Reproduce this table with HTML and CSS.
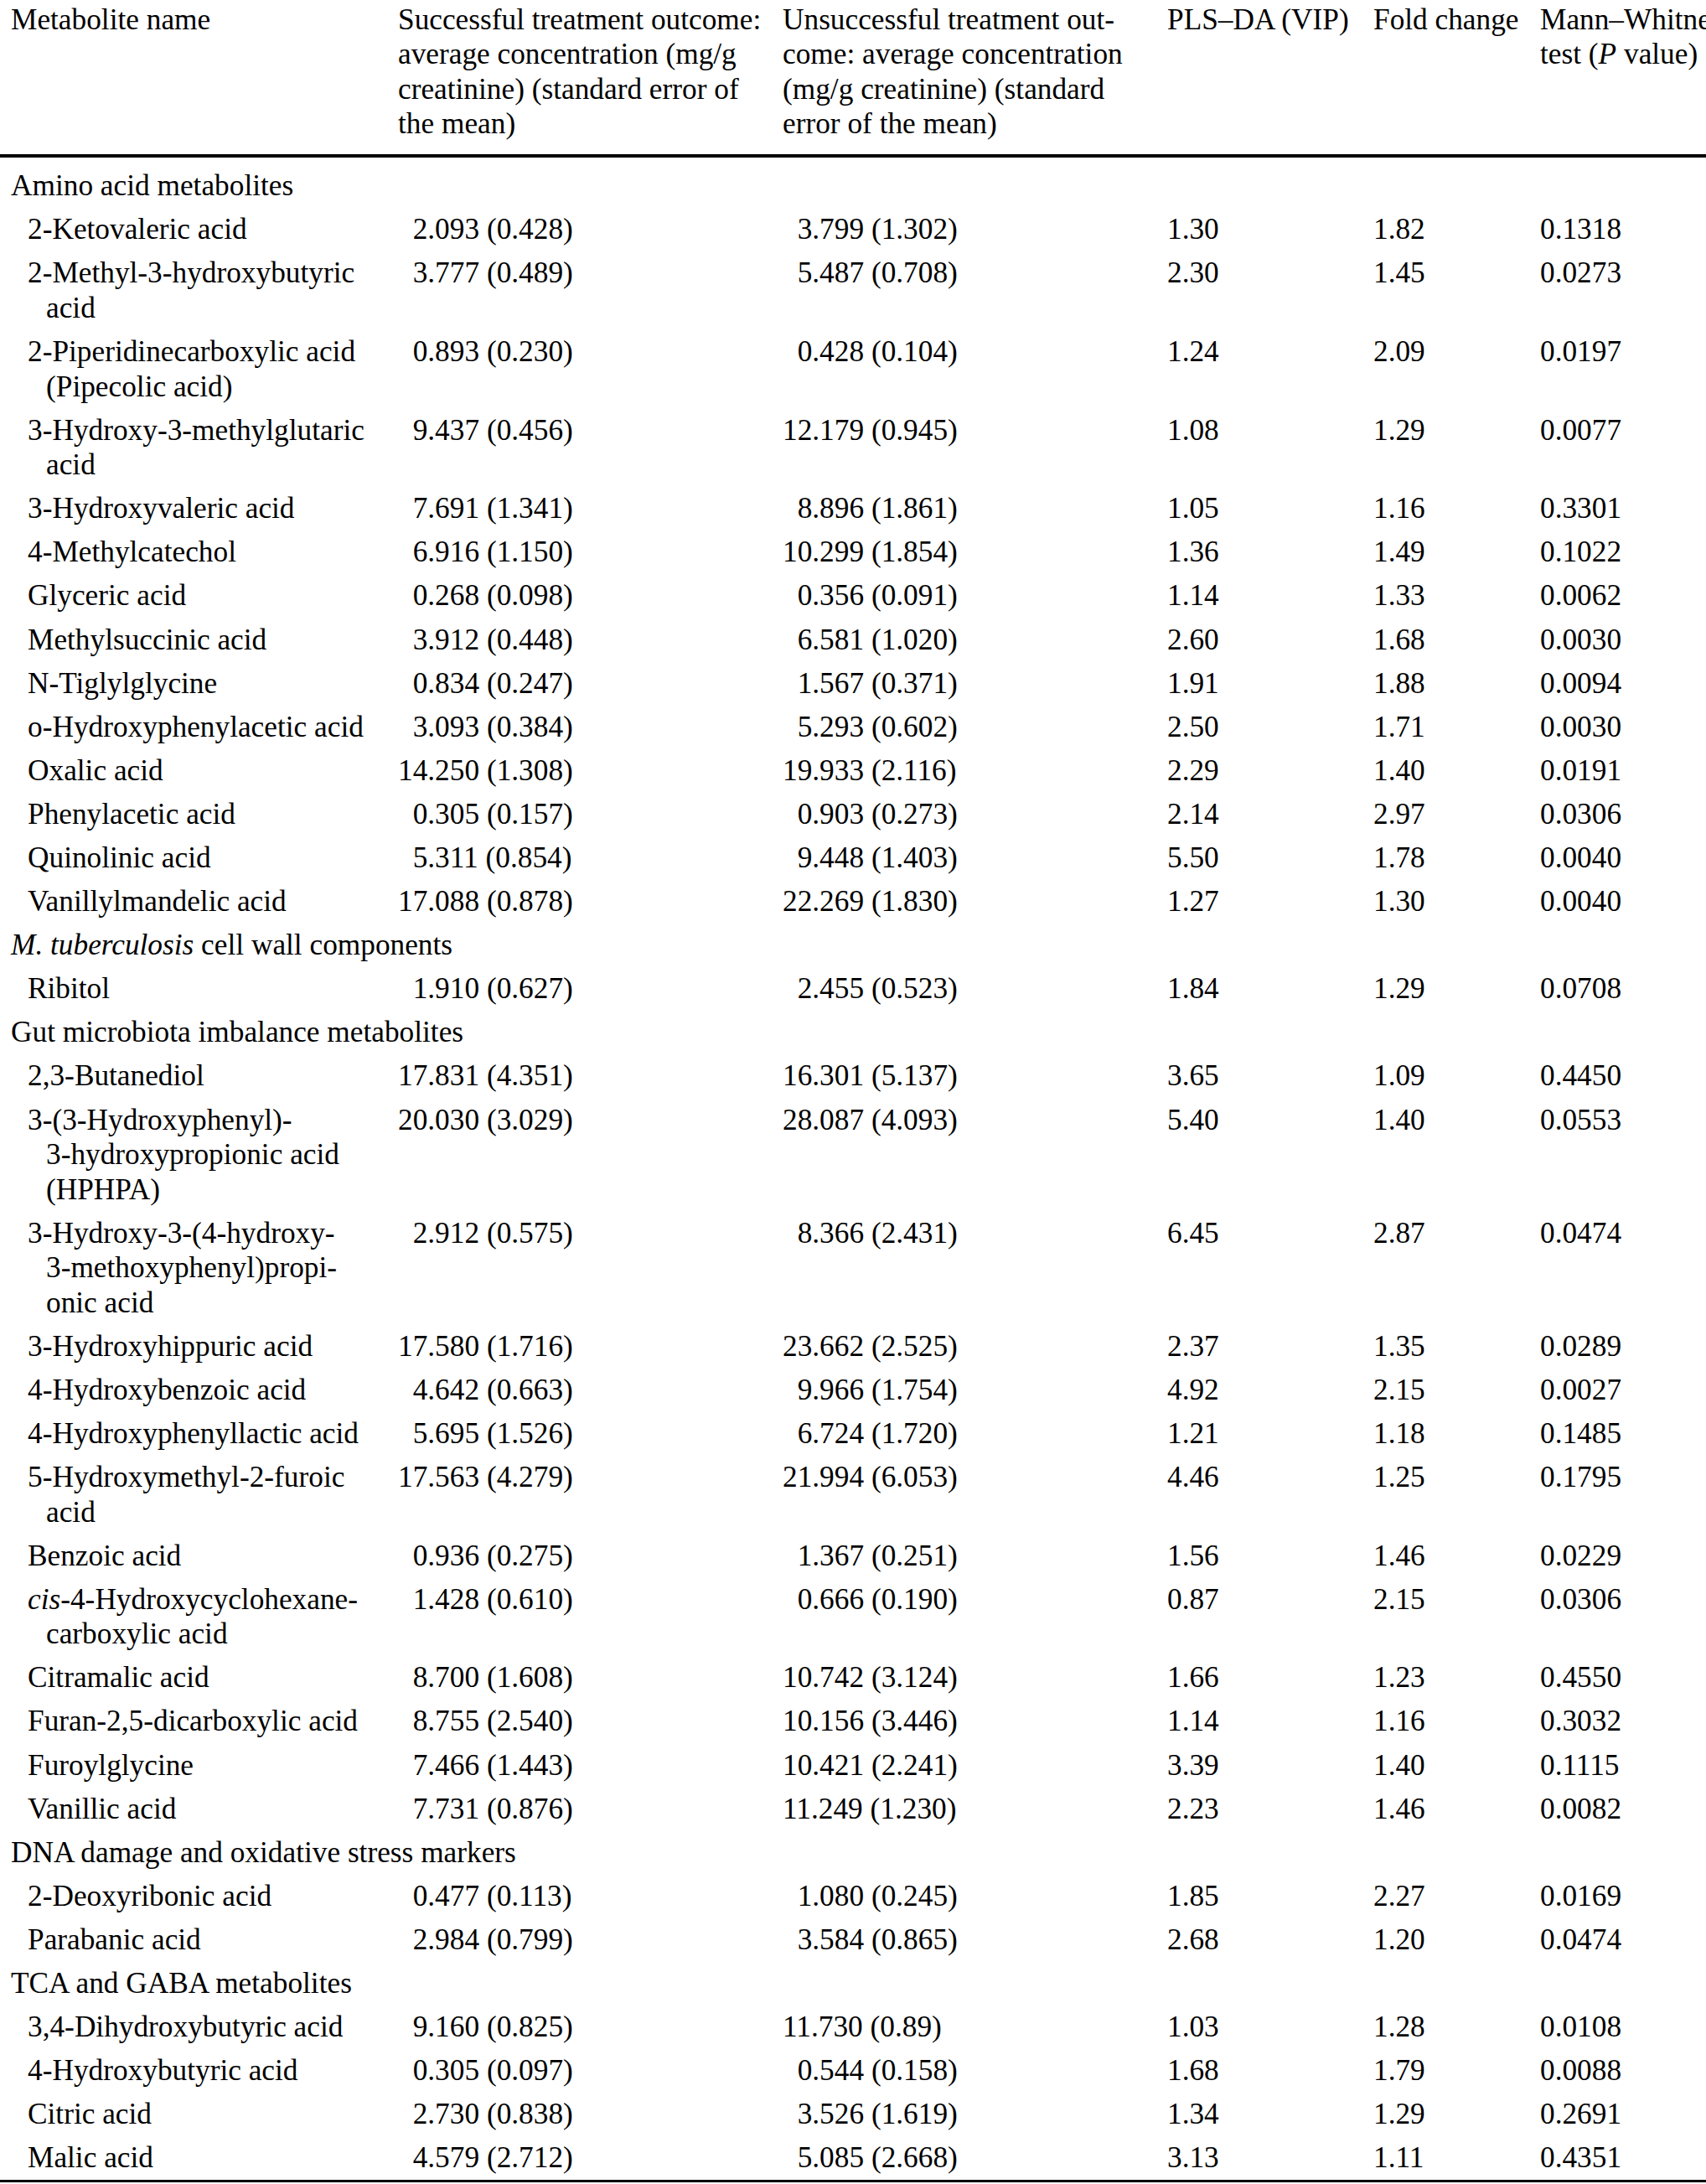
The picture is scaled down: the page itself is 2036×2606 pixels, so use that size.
FILE: index.html
```
<!DOCTYPE html>
<html lang="en">

<head>
    <meta charset="UTF-8">
    <meta name="viewport" content="width=device-width, initial-scale=1.0">
    <title>Urinary metabolites and treatment outcome</title>
    <link rel="stylesheet" href="styles.css">
</head>

<body>
    <div class="page">
        <table class="data">
            <colgroup>
                <col class="c-name">
                <col class="c-ok">
                <col class="c-fail">
                <col class="c-vip">
                <col class="c-fold">
                <col class="c-p">
            </colgroup>
            <thead>
                <tr>
                    <th class="first">Metabolite name</th>
                    <th>Successful treatment outcome:<br>average concentration (mg/g<br>creatinine) (standard error of<br>the mean)</th>
                    <th>Unsuccessful treatment out-<br>come: average concentration<br>(mg/g creatinine) (standard<br>error of the mean)</th>
                    <th>PLS–DA (VIP)</th>
                    <th>Fold change</th>
                    <th>Mann–Whitney<br>test (<i>P</i> value)</th>
                </tr>
            </thead>
            <tbody>
                <tr class="cat top"><td colspan="6">Amino acid metabolites</td></tr>
                <tr><td class="item">2-Ketovaleric acid</td><td class="n1">2.093 (0.428)</td><td class="n1">3.799 (1.302)</td><td>1.30</td><td>1.82</td><td>0.1318</td></tr>
                <tr><td class="item">2-Methyl-3-hydroxybutyric<br>acid</td><td class="n1">3.777 (0.489)</td><td class="n1">5.487 (0.708)</td><td>2.30</td><td>1.45</td><td>0.0273</td></tr>
                <tr><td class="item">2-Piperidinecarboxylic acid<br>(Pipecolic acid)</td><td class="n1">0.893 (0.230)</td><td class="n1">0.428 (0.104)</td><td>1.24</td><td>2.09</td><td>0.0197</td></tr>
                <tr><td class="item">3-Hydroxy-3-methylglutaric<br>acid</td><td class="n1">9.437 (0.456)</td><td>12.179 (0.945)</td><td>1.08</td><td>1.29</td><td>0.0077</td></tr>
                <tr><td class="item">3-Hydroxyvaleric acid</td><td class="n1">7.691 (1.341)</td><td class="n1">8.896 (1.861)</td><td>1.05</td><td>1.16</td><td>0.3301</td></tr>
                <tr><td class="item">4-Methylcatechol</td><td class="n1">6.916 (1.150)</td><td>10.299 (1.854)</td><td>1.36</td><td>1.49</td><td>0.1022</td></tr>
                <tr><td class="item">Glyceric acid</td><td class="n1">0.268 (0.098)</td><td class="n1">0.356 (0.091)</td><td>1.14</td><td>1.33</td><td>0.0062</td></tr>
                <tr><td class="item">Methylsuccinic acid</td><td class="n1">3.912 (0.448)</td><td class="n1">6.581 (1.020)</td><td>2.60</td><td>1.68</td><td>0.0030</td></tr>
                <tr><td class="item">N-Tiglylglycine</td><td class="n1">0.834 (0.247)</td><td class="n1">1.567 (0.371)</td><td>1.91</td><td>1.88</td><td>0.0094</td></tr>
                <tr><td class="item">o-Hydroxyphenylacetic acid</td><td class="n1">3.093 (0.384)</td><td class="n1">5.293 (0.602)</td><td>2.50</td><td>1.71</td><td>0.0030</td></tr>
                <tr><td class="item">Oxalic acid</td><td>14.250 (1.308)</td><td>19.933 (2.116)</td><td>2.29</td><td>1.40</td><td>0.0191</td></tr>
                <tr><td class="item">Phenylacetic acid</td><td class="n1">0.305 (0.157)</td><td class="n1">0.903 (0.273)</td><td>2.14</td><td>2.97</td><td>0.0306</td></tr>
                <tr><td class="item">Quinolinic acid</td><td class="n1">5.311 (0.854)</td><td class="n1">9.448 (1.403)</td><td>5.50</td><td>1.78</td><td>0.0040</td></tr>
                <tr><td class="item">Vanillylmandelic acid</td><td>17.088 (0.878)</td><td>22.269 (1.830)</td><td>1.27</td><td>1.30</td><td>0.0040</td></tr>

                <tr class="cat"><td colspan="6"><i>M. tuberculosis</i> cell wall components</td></tr>
                <tr><td class="item">Ribitol</td><td class="n1">1.910 (0.627)</td><td class="n1">2.455 (0.523)</td><td>1.84</td><td>1.29</td><td>0.0708</td></tr>

                <tr class="cat"><td colspan="6">Gut microbiota imbalance metabolites</td></tr>
                <tr><td class="item">2,3-Butanediol</td><td>17.831 (4.351)</td><td>16.301 (5.137)</td><td>3.65</td><td>1.09</td><td>0.4450</td></tr>
                <tr><td class="item">3-(3-Hydroxyphenyl)-<br>3-hydroxypropionic acid<br>(HPHPA)</td><td>20.030 (3.029)</td><td>28.087 (4.093)</td><td>5.40</td><td>1.40</td><td>0.0553</td></tr>
                <tr><td class="item">3-Hydroxy-3-(4-hydroxy-<br>3-methoxyphenyl)propi-<br>onic acid</td><td class="n1">2.912 (0.575)</td><td class="n1">8.366 (2.431)</td><td>6.45</td><td>2.87</td><td>0.0474</td></tr>
                <tr><td class="item">3-Hydroxyhippuric acid</td><td>17.580 (1.716)</td><td>23.662 (2.525)</td><td>2.37</td><td>1.35</td><td>0.0289</td></tr>
                <tr><td class="item">4-Hydroxybenzoic acid</td><td class="n1">4.642 (0.663)</td><td class="n1">9.966 (1.754)</td><td>4.92</td><td>2.15</td><td>0.0027</td></tr>
                <tr><td class="item">4-Hydroxyphenyllactic acid</td><td class="n1">5.695 (1.526)</td><td class="n1">6.724 (1.720)</td><td>1.21</td><td>1.18</td><td>0.1485</td></tr>
                <tr><td class="item">5-Hydroxymethyl-2-furoic<br>acid</td><td>17.563 (4.279)</td><td>21.994 (6.053)</td><td>4.46</td><td>1.25</td><td>0.1795</td></tr>
                <tr><td class="item">Benzoic acid</td><td class="n1">0.936 (0.275)</td><td class="n1">1.367 (0.251)</td><td>1.56</td><td>1.46</td><td>0.0229</td></tr>
                <tr><td class="item"><i>cis</i>-4-Hydroxycyclohexane-<br>carboxylic acid</td><td class="n1">1.428 (0.610)</td><td class="n1">0.666 (0.190)</td><td>0.87</td><td>2.15</td><td>0.0306</td></tr>
                <tr><td class="item">Citramalic acid</td><td class="n1">8.700 (1.608)</td><td>10.742 (3.124)</td><td>1.66</td><td>1.23</td><td>0.4550</td></tr>
                <tr><td class="item">Furan-2,5-dicarboxylic acid</td><td class="n1">8.755 (2.540)</td><td>10.156 (3.446)</td><td>1.14</td><td>1.16</td><td>0.3032</td></tr>
                <tr><td class="item">Furoylglycine</td><td class="n1">7.466 (1.443)</td><td>10.421 (2.241)</td><td>3.39</td><td>1.40</td><td>0.1115</td></tr>
                <tr><td class="item">Vanillic acid</td><td class="n1">7.731 (0.876)</td><td>11.249 (1.230)</td><td>2.23</td><td>1.46</td><td>0.0082</td></tr>

                <tr class="cat"><td colspan="6">DNA damage and oxidative stress markers</td></tr>
                <tr><td class="item">2-Deoxyribonic acid</td><td class="n1">0.477 (0.113)</td><td class="n1">1.080 (0.245)</td><td>1.85</td><td>2.27</td><td>0.0169</td></tr>
                <tr><td class="item">Parabanic acid</td><td class="n1">2.984 (0.799)</td><td class="n1">3.584 (0.865)</td><td>2.68</td><td>1.20</td><td>0.0474</td></tr>

                <tr class="cat"><td colspan="6">TCA and GABA metabolites</td></tr>
                <tr><td class="item">3,4-Dihydroxybutyric acid</td><td class="n1">9.160 (0.825)</td><td>11.730 (0.89)</td><td>1.03</td><td>1.28</td><td>0.0108</td></tr>
                <tr><td class="item">4-Hydroxybutyric acid</td><td class="n1">0.305 (0.097)</td><td class="n1">0.544 (0.158)</td><td>1.68</td><td>1.79</td><td>0.0088</td></tr>
                <tr><td class="item">Citric acid</td><td class="n1">2.730 (0.838)</td><td class="n1">3.526 (1.619)</td><td>1.34</td><td>1.29</td><td>0.2691</td></tr>
                <tr class="last"><td class="item">Malic acid</td><td class="n1">4.579 (2.712)</td><td class="n1">5.085 (2.668)</td><td>3.13</td><td>1.11</td><td>0.4351</td></tr>
            </tbody>
        </table>
    </div>
</body>

</html>
```

FILE: styles.css
```
* {
    margin: 0;
    padding: 0;
}

body {
    background-color: #fff;
    color: #000;
    font-family: "Liberation Serif", "Times New Roman", serif;
    font-size: 35.3px;
    line-height: 41.5px;
}

.page {
    width: 2036px;
    overflow: hidden;
}

.data {
    width: 2090px;
    table-layout: fixed;
    border-collapse: collapse;
    border-spacing: 0;
}

.c-name {
    width: 475px;
}

.c-ok,
.c-fail {
    width: 459px;
}

.c-vip {
    width: 246px;
}

.c-fold {
    width: 199px;
}

.c-p {
    width: 252px;
}

.data th,
.data td {
    padding: 0;
    text-align: left;
    vertical-align: top;
    white-space: nowrap;
    font-weight: normal;
}

.data thead th {
    padding-top: 2.5px;
    padding-bottom: 15.5px;
    border-bottom: 4.5px solid #000;
}

.data thead th.first {
    padding-left: 13px;
}

.data tbody td {
    padding-top: 5.3px;
    padding-bottom: 5.3px;
}

/* group heading rows */
.data .cat td {
    padding-left: 13px;
}

.data .top td {
    padding-top: 13.3px;
}

/* metabolite names: wrapped lines hang further in */
.data td.item {
    padding-left: 55px;
    text-indent: -22px;
}

/* values with a one-digit integer part line up on the point */
.data td.n1 {
    padding-left: 0.5em;
}

.data .last td {
    border-bottom: 3.5px solid #000;
}
```
